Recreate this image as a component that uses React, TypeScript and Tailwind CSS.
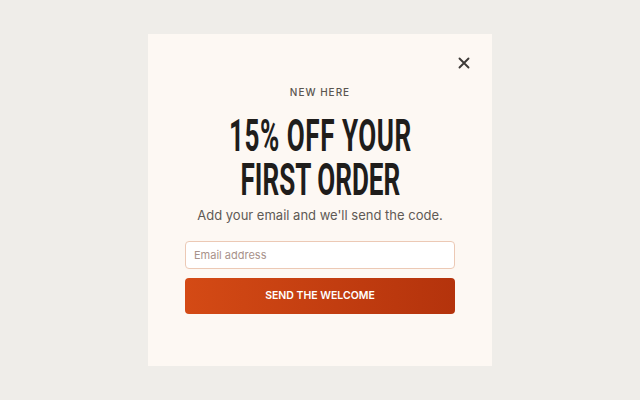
import React from 'react';

export default function App() {
  return (
    <div className="w-[640px] h-[400px] bg-[#efede9] flex items-center justify-center font-['Inter','Noto_Sans',sans-serif]">
      <div className="relative w-[344px] h-[332px] bg-[#fdf8f3] flex flex-col items-center pt-[52px] px-[37px]">
        {/* Close button */}
        <button className="absolute top-[23px] right-[22px] w-[12px] h-[12px] flex items-center justify-center text-[#3d3a37]">
          <svg width="12" height="12" viewBox="0 0 12 12" fill="none">
            <path d="M1.5 1.5L10.5 10.5M10.5 1.5L1.5 10.5" stroke="currentColor" strokeWidth="1.9" strokeLinecap="round" />
          </svg>
        </button>

        <p className="text-[10px] leading-[12px] font-medium tracking-[0.1em] text-[#5a5550]">NEW HERE</p>

        <h1 className="mt-[17px] whitespace-nowrap text-center text-[43.5px] leading-[44px] font-bold text-[#1f1d1b] font-['Roboto','Liberation_Sans',sans-serif] scale-x-[0.6]">
          <span className="inline-block tracking-[0.02em]">15% OFF YOUR</span>
          <br />
          FIRST ORDER
        </h1>

        <p className="mt-[2px] text-[13px] leading-[20px] text-[#5f5a55]">Add your email and we'll send the code.</p>

        <input
          type="email"
          placeholder="Email address"
          className="mt-[16px] w-full h-[28px] bg-white border border-[#ecc9b5] rounded-[4px] px-[8px] text-[11px] text-[#3d3a37] placeholder:text-[#a8928a] outline-none"
        />

        <button className="mt-[9px] w-full h-[36px] rounded-[4px] bg-gradient-to-r from-[#d44a15] to-[#b4330c] text-white text-[10.5px] font-semibold">
          SEND THE WELCOME
        </button>
      </div>
    </div>
  );
}
